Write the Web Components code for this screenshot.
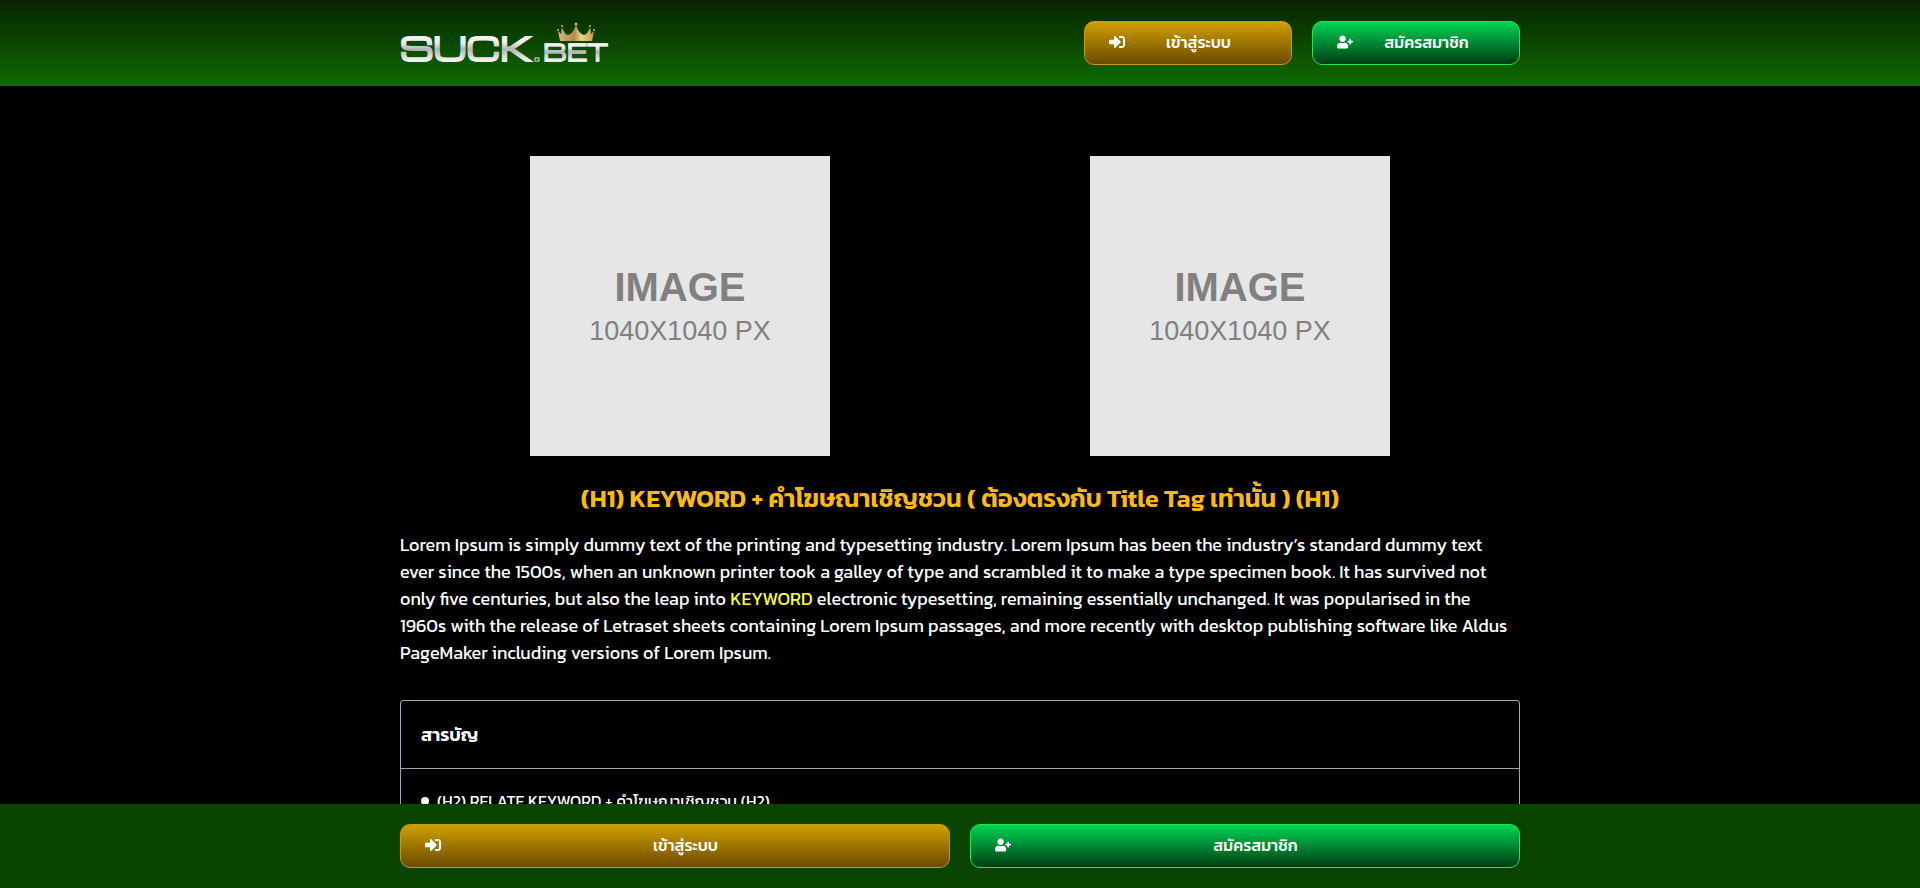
<!DOCTYPE html>
<html lang="th">
<head>
<meta charset="utf-8">
<meta name="viewport" content="width=device-width, initial-scale=1">
<title>SUCK.BET</title>
<style>
  body { margin: 0; background: #000; color: #fff; font: 400 18px/27px Kanit, "Noto Sans", "Noto Sans Thai", sans-serif; }
</style>
</head>
<body>
<suck-page></suck-page>
<script>
const define = (name, html) => {
  const template = document.createElement('template');
  template.innerHTML = html;
  customElements.define(name, class extends HTMLElement {
    constructor() {
      super();
      this.attachShadow({ mode: 'open' }).append(template.content.cloneNode(true));
    }
  });
};

define('brand-logo', `
  <style>
    :host { display: block; }
    a, svg { display: block; }
    svg { overflow: visible; }
    text { font-family: Michroma, Orbitron, "DejaVu Sans", sans-serif; font-weight: 700; fill: url(#silver); stroke: url(#silver); }
  </style>
  <a href="#" aria-label="SUCK.BET">
    <svg width="208" height="60" viewBox="0 -8 208 60">
      <defs>
        <linearGradient id="silver" x1="0" y1="0" x2="0" y2="1">
          <stop offset="0" stop-color="#fff"/><stop offset=".4" stop-color="#eee"/>
          <stop offset=".55" stop-color="#b4b4b4"/><stop offset=".8" stop-color="#f4f4f4"/>
        </linearGradient>
        <linearGradient id="gold">
          <stop offset="0" stop-color="#d9b878"/><stop offset=".45" stop-color="#b18a49"/>
          <stop offset=".65" stop-color="#ecd28a"/><stop offset="1" stop-color="#c49a50"/>
        </linearGradient>
      </defs>
      <text x="0" y="40" font-size="32" stroke-width="1">SUCK</text>
      <rect x="135" y="37" width="4" height="3" fill="none" stroke="#ddd"/>
      <text x="143" y="40" font-size="23" stroke-width=".5">BET</text>
      <path fill="url(#gold)" d="M160 20 158 10 161 13 162 6Q164 13 168 14 173 13 176 4 179 13 184 14 188 13 190 6L191 13 194 10 192 20Z"/>
      <g fill="#d5b16c"><circle cx="158" cy="9" r="1"/><circle cx="162" cy="5" r="1"/><circle cx="176" cy="3" r="1.500"/><circle cx="190" cy="5" r="1"/><circle cx="194" cy="9" r="1"/></g>
    </svg>
  </a>`);

define('icon-login', `
  <style>:host, svg { display: block; width: 16px; height: 16px; }</style>
  <svg viewBox="0 0 512 512" fill="currentColor" aria-hidden="true"><path d="M416 448h-84c-6.600 0-12-5.400-12-12v-40c0-6.600 5.400-12 12-12h84c17.700 0 32-14.300 32-32V160c0-17.700-14.300-32-32-32h-84c-6.600 0-12-5.400-12-12V76c0-6.600 5.400-12 12-12h84c53 0 96 43 96 96v192c0 53-43 96-96 96zm-47-209L201 71c-15-15-41-4.500-41 17v96H24c-13.300 0-24 10.700-24 24v96c0 13.300 10.700 24 24 24h136v96c0 21.500 26 32 41 17l168-168c9.300-9.400 9.300-24.600 0-34z"/></svg>`);

define('icon-join', `
  <style>:host, svg { display: block; width: 16px; height: 16px; }</style>
  <svg viewBox="0 0 640 512" fill="currentColor" aria-hidden="true"><path d="M624 208h-64v-64c0-8.800-7.200-16-16-16h-32c-8.800 0-16 7.200-16 16v64h-64c-8.800 0-16 7.200-16 16v32c0 8.800 7.200 16 16 16h64v64c0 8.800 7.200 16 16 16h32c8.800 0 16-7.200 16-16v-64h64c8.800 0 16-7.200 16-16v-32c0-8.800-7.200-16-16-16zm-400 48c70.700 0 128-57.300 128-128S294.700 0 224 0 96 57.300 96 128s57.300 128 128 128zm89.600 32h-16.700c-22.200 10.200-46.900 16-72.900 16s-50.600-5.800-72.900-16h-16.700C60.200 288 0 348.200 0 422.400V464c0 26.500 21.500 48 48 48h352c26.500 0 48-21.500 48-48v-41.600c0-74.200-60.200-134.400-134.400-134.400z"/></svg>`);

define('action-button', `
  <style>
    :host { display: block; --top: #d0a000; --bottom: #6b4a00; --edge: #c39a1b; }
    :host([kind="join"]) { --top: #00d455; --bottom: #003d12; --edge: #22e64e; }
    button { box-sizing: border-box; display: flex; align-items: center; gap: 5px; width: 100%; height: 44px; margin: 0; padding: 0 24px 2px; border: 1px solid var(--edge); border-radius: 10px; background: linear-gradient(var(--top), var(--bottom)); color: #fff; font: inherit; font-size: 16px; font-weight: 500; line-height: 24px; cursor: pointer; }
    span { flex: 1; text-align: center; white-space: nowrap; }
  </style>
  <button type="button"><slot name="icon"></slot><span><slot></slot></span></button>`);

define('site-header', `
  <style>
    :host { display: block; background: linear-gradient(#062300, #106b00); }
    .inner { box-sizing: border-box; max-width: 1120px; min-height: 86px; margin: 0 auto; display: flex; align-items: center; justify-content: space-between; }
    nav { display: flex; gap: 20px; }
    action-button { width: 208px; }
  </style>
  <div class="inner">
    <brand-logo></brand-logo>
    <nav>
      <action-button><icon-login slot="icon"></icon-login>เข้าสู่ระบบ</action-button>
      <action-button kind="join"><icon-join slot="icon"></icon-join>สมัครสมาชิก</action-button>
    </nav>
  </div>`);

define('image-placeholder', `
  <style>
    :host { box-sizing: border-box; display: flex; flex-direction: column; align-items: center; justify-content: center; width: 300px; height: 300px; padding-top: 6px; background: #e6e6e6; color: #808080; font-family: "Liberation Sans", Arial, sans-serif; }
    b { font-size: 40px; line-height: 44px; }
    span { font-size: 27px; line-height: 44px; }
  </style>
  <b>IMAGE</b><span>1040X1040 PX</span>`);

define('contents-box', `
  <style>
    :host { display: block; border: 1px solid #9da5ae; border-radius: 3px; }
    h4 { margin: 0; padding: 20px; border-bottom: 1px solid #9da5ae; font-size: 18px; line-height: 27px; font-weight: 600; }
    ul { margin: 0; padding: 20px; list-style: none; }
    li { display: flex; align-items: center; gap: 8px; font-size: 16px; line-height: 24px; }
    li::before { content: ""; width: 8px; height: 8px; border-radius: 50%; background: #fff; }
    a { color: inherit; text-decoration: none; }
  </style>
  <h4>สารบัญ</h4>
  <ul><li><a href="#">(H2) RELATE KEYWORD + คำโฆษณาเชิญชวน (H2)</a></li></ul>`);

define('bottom-bar', `
  <style>
    :host { position: fixed; inset: auto 0 0 0; display: block; background: #094500; }
    .inner { max-width: 1120px; margin: 0 auto; padding: 20px 0; display: grid; grid-template-columns: 1fr 1fr; gap: 20px; }
  </style>
  <div class="inner">
    <action-button><icon-login slot="icon"></icon-login>เข้าสู่ระบบ</action-button>
    <action-button kind="join"><icon-join slot="icon"></icon-join>สมัครสมาชิก</action-button>
  </div>`);

define('suck-page', `
  <style>
    :host { display: block; padding-bottom: 84px; }
    main { max-width: 1120px; margin: 0 auto; padding-top: 70px; }
    .pictures { display: grid; grid-template-columns: 1fr 1fr; justify-items: center; }
    h1 { margin: 23px 0 13px; color: #fdb913; font-size: 25px; line-height: 39px; font-weight: 600; text-align: center; }
    p { margin: 0 0 34px; }
    p a { color: #ffff2e; text-decoration: none; }
  </style>
  <site-header></site-header>
  <main>
    <div class="pictures"><image-placeholder></image-placeholder><image-placeholder></image-placeholder></div>
    <h1>(H1) KEYWORD + คำโฆษณาเชิญชวน ( ต้องตรงกับ Title Tag เท่านั้น ) (H1)</h1>
    <p>Lorem Ipsum is simply dummy text of the printing and typesetting industry. Lorem Ipsum has been the industry’s standard dummy text ever since the 1500s, when an unknown printer took a galley of type and scrambled it to make a type specimen book. It has survived not only five centuries, but also the leap into <a href="#">KEYWORD</a> electronic typesetting, remaining essentially unchanged. It was popularised in the 1960s with the release of Letraset sheets containing Lorem Ipsum passages, and more recently with desktop publishing software like Aldus PageMaker including versions of Lorem Ipsum.</p>
    <contents-box></contents-box>
  </main>
  <bottom-bar></bottom-bar>`);
</script>
</body>
</html>
